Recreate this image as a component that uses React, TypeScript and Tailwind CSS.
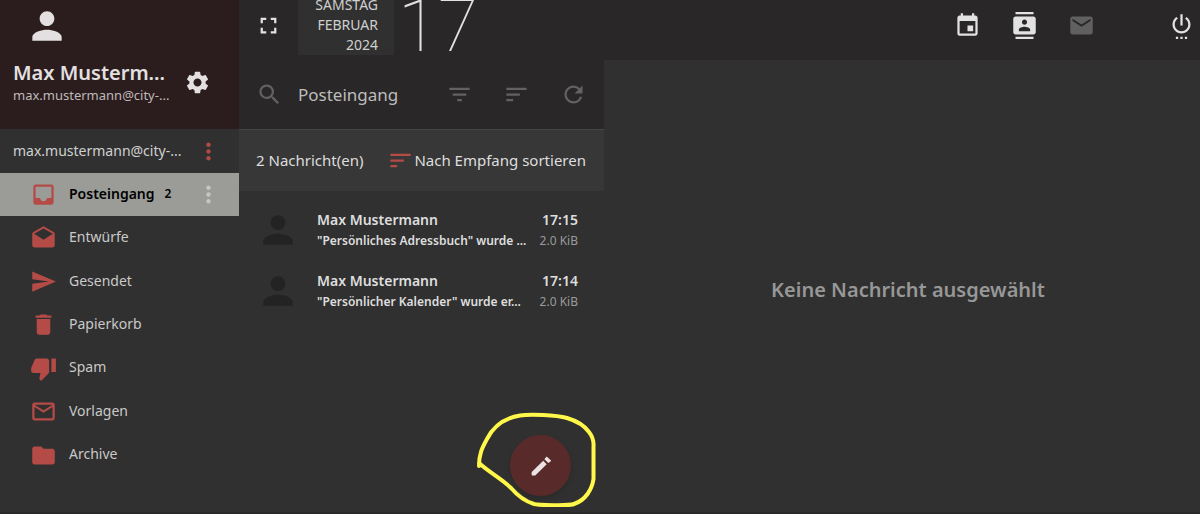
import React from 'react';
import type { IconType } from 'react-icons';
import {
  MdContacts,
  MdDelete,
  MdDrafts,
  MdEvent,
  MdFilterList,
  MdFolder,
  MdFullscreen,
  MdInbox,
  MdMail,
  MdMoreVert,
  MdOutlineMail,
  MdPerson,
  MdRefresh,
  MdSearch,
  MdSend,
  MdSettings,
  MdSettingsPower,
  MdSort,
  MdThumbDown,
} from 'react-icons/md';

interface Folder {
  name: string;
  icon: IconType;
  unread?: number;
}

interface Message {
  sender: string;
  time: string;
  subject: string;
  size: string;
}

const folders: Folder[] = [
  { name: 'Posteingang', icon: MdInbox, unread: 2 },
  { name: 'Entwürfe', icon: MdDrafts },
  { name: 'Gesendet', icon: MdSend },
  { name: 'Papierkorb', icon: MdDelete },
  { name: 'Spam', icon: MdThumbDown },
  { name: 'Vorlagen', icon: MdOutlineMail },
  { name: 'Archive', icon: MdFolder },
];

const messages: Message[] = [
  { sender: 'Max Mustermann', time: '17:15', subject: '"Persönliches Adressbuch" wurde ...', size: '2.0 KiB' },
  { sender: 'Max Mustermann', time: '17:14', subject: '"Persönlicher Kalender" wurde er...', size: '2.0 KiB' },
];

const PencilIcon: React.FC<{ className?: string }> = ({ className }) => (
  <svg viewBox="0 0 24 24" className={className} fill="currentColor" aria-hidden="true">
    <path d="M2.600 20.600v-1.800c0-.4.1-.7.4-1L14.200 6.700l3.500 3.500L6.500 21.200c-.3.3-.6.4-1 .4H3.600c-.6 0-1-.4-1-1z" />
    <path d="M15.400 5.300L17.200 3c.3-.3.7-.3 1 0L21.800 6.200c.3.3.3.7 0 1L19.300 9z" />
  </svg>
);

const Sidebar: React.FC = () => (
  <aside className="flex w-[239px] shrink-0 flex-col bg-[#303030]">
    <div className="flex h-[129px] flex-col bg-[#2b1d1d] pl-[13px]">
      <MdPerson className="ml-3 mt-1 size-11 text-[#e4e0e1]" />
      <div className="mt-3 flex items-center">
        <div className="w-[171px] whitespace-nowrap">
          <div className="text-xl font-semibold leading-[26px] text-[#e4e0e1]">Max Musterm...</div>
          <div className="text-[13px] leading-[18px] text-[#bfb9b9]">max.mustermann@city-...</div>
        </div>
        <button type="button" aria-label="Einstellungen" className="text-[#e4e0e1]">
          <MdSettings className="size-[27px]" />
        </button>
      </div>
    </div>
    <div className="flex h-11 items-center pl-[13px] text-[#d0d0d0]">
      <span className="w-[182px] whitespace-nowrap text-sm">max.mustermann@city-...</span>
      <button type="button" aria-label="Kontomenü" className="text-[#b34a46]">
        <MdMoreVert className="size-[27px]" />
      </button>
    </div>
    <nav className="grid h-[304px] auto-rows-fr">
      {folders.map(({ name, icon: Icon, unread }) => (
        <div
          key={name}
          className={unread ? 'flex items-center bg-[#9b9c97] pl-[30px] text-sm font-semibold text-black' : 'flex items-center pl-[30px] text-sm text-[#c9c9c9]'}
        >
          <a href="#" className="flex w-[165px] items-center">
            <Icon className="size-[27px] text-[#b54b47]" />
            <span className="ml-3 pb-0.5">{name}</span>
            {unread && <span className="ml-2.5 pb-0.5 text-xs">{unread}</span>}
          </a>
          {unread && (
            <button type="button" aria-label="Ordnermenü" className="text-[#c6c6c4]">
              <MdMoreVert className="size-[27px]" />
            </button>
          )}
        </div>
      ))}
    </nav>
  </aside>
);

const TopBar: React.FC = () => (
  <header className="flex h-[60px] items-start justify-between overflow-hidden bg-[#2a2728] text-[#e2e2e2]">
    <div className="flex items-start">
      <button type="button" aria-label="Vollbild" className="ml-4 mt-3">
        <MdFullscreen className="size-[27px]" />
      </button>
      <div className="ml-4 h-[55px] w-24 bg-[#303030] pr-4 text-right text-sm uppercase leading-5 text-[#cfcfcf]">
        <div className="-mt-[5px]">
          <div>Samstag</div>
          <div>Februar</div>
          <div>2024</div>
        </div>
      </div>
      <div className="-mt-3 ml-1 font-[Roboto] text-[73px] font-thin leading-[76px]">17</div>
    </div>
    <div className="flex pr-[5px] pt-3">
      <button type="button" aria-label="Kalender">
        <MdEvent className="size-[27px]" />
      </button>
      <button type="button" aria-label="Kontakte" className="ml-[30px]">
        <MdContacts className="size-[27px]" />
      </button>
      <button type="button" aria-label="E-Mail" className="ml-[30px] text-[#606060]">
        <MdMail className="size-[27px]" />
      </button>
      <button type="button" aria-label="Abmelden" className="ml-[73px]">
        <MdSettingsPower className="size-[27px]" />
      </button>
    </div>
  </header>
);

const MessageList: React.FC = () => (
  <section className="relative w-[365px] shrink-0 bg-[#303030]">
    <div className="flex h-[69px] items-center bg-[#2a2728] pl-[17px] text-[#626262]">
      <label htmlFor="search" className="text-[#626262]">
        <MdSearch className="size-[27px]" />
      </label>
      <input
        id="search"
        type="text"
        placeholder="Posteingang"
        className="ml-[15px] w-[148px] bg-transparent text-[17px] outline-none placeholder:text-[#bcbcbc]"
      />
      <button type="button" aria-label="Filtern">
        <MdFilterList className="size-[27px]" />
      </button>
      <button type="button" aria-label="Sortieren" className="ml-[30px]">
        <MdSort className="size-[27px]" />
      </button>
      <button type="button" aria-label="Aktualisieren" className="ml-[30px]">
        <MdRefresh className="size-[27px]" />
      </button>
    </div>
    <div className="flex h-[62px] items-center justify-between border-t border-[#454545] bg-[#373737] pl-[17px] pr-[18px] text-[15px] text-[#dedede]">
      <span>2 Nachricht(en)</span>
      <button type="button" className="flex items-center">
        <MdSort className="size-[27px] text-[#b54b47]" />
        Nach Empfang sortieren
      </button>
    </div>
    <ul className="pt-2">
      {messages.map((message) => (
        <li key={message.time} className="flex h-[61px] items-center whitespace-nowrap pl-[17px] pr-[26px]">
          <MdPerson className="size-11 shrink-0 text-[#232323]" />
          <div className="ml-[17px] min-w-0 flex-1 font-semibold text-[#dedede]">
            <div className="flex justify-between text-sm leading-[22px]">
              <span>{message.sender}</span>
              <span>{message.time}</span>
            </div>
            <div className="flex justify-between text-xs leading-5">
              <span>{message.subject}</span>
              <span className="font-normal text-[#9a9a9a]">{message.size}</span>
            </div>
          </div>
        </li>
      ))}
    </ul>
    <button
      type="button"
      aria-label="Neue Nachricht"
      className="absolute bottom-4 right-[33px] flex size-[61px] items-center justify-center rounded-full bg-[#582b2a] text-[#ece2e3] shadow-md"
    >
      <PencilIcon className="size-6" />
    </button>
    <svg
      viewBox="0 0 122 98"
      className="pointer-events-none absolute bottom-[5px] right-[6px] h-[98px] w-[122px]"
      fill="none"
      stroke="#fff84a"
      strokeWidth="4"
      strokeLinecap="round"
      strokeLinejoin="round"
      aria-hidden="true"
    >
      <path d="M3 57C3 45 6 39 11 30C18 16 29 9 44 6.500C54 5 80 6 91 9C101 12 108 16 113 23C117 28 118 32 117.500 38V70C116 80 110 91 98 95C92 97 62 96 58 95C48 92 41 86 35 79C26 70 14 64 3 54" />
    </svg>
  </section>
);

const App: React.FC = () => (
  <div className="flex min-h-screen border-b-2 border-[#2a2728] bg-[#303030] font-['Noto_Sans',sans-serif]">
    <Sidebar />
    <div className="flex min-w-0 flex-1 flex-col">
      <TopBar />
      <div className="flex flex-1">
        <MessageList />
        <main className="flex flex-1 items-center justify-center pl-3 pt-2">
          <p className="text-xl font-semibold text-[#979797]">Keine Nachricht ausgewählt</p>
        </main>
      </div>
    </div>
  </div>
);

export default App;
